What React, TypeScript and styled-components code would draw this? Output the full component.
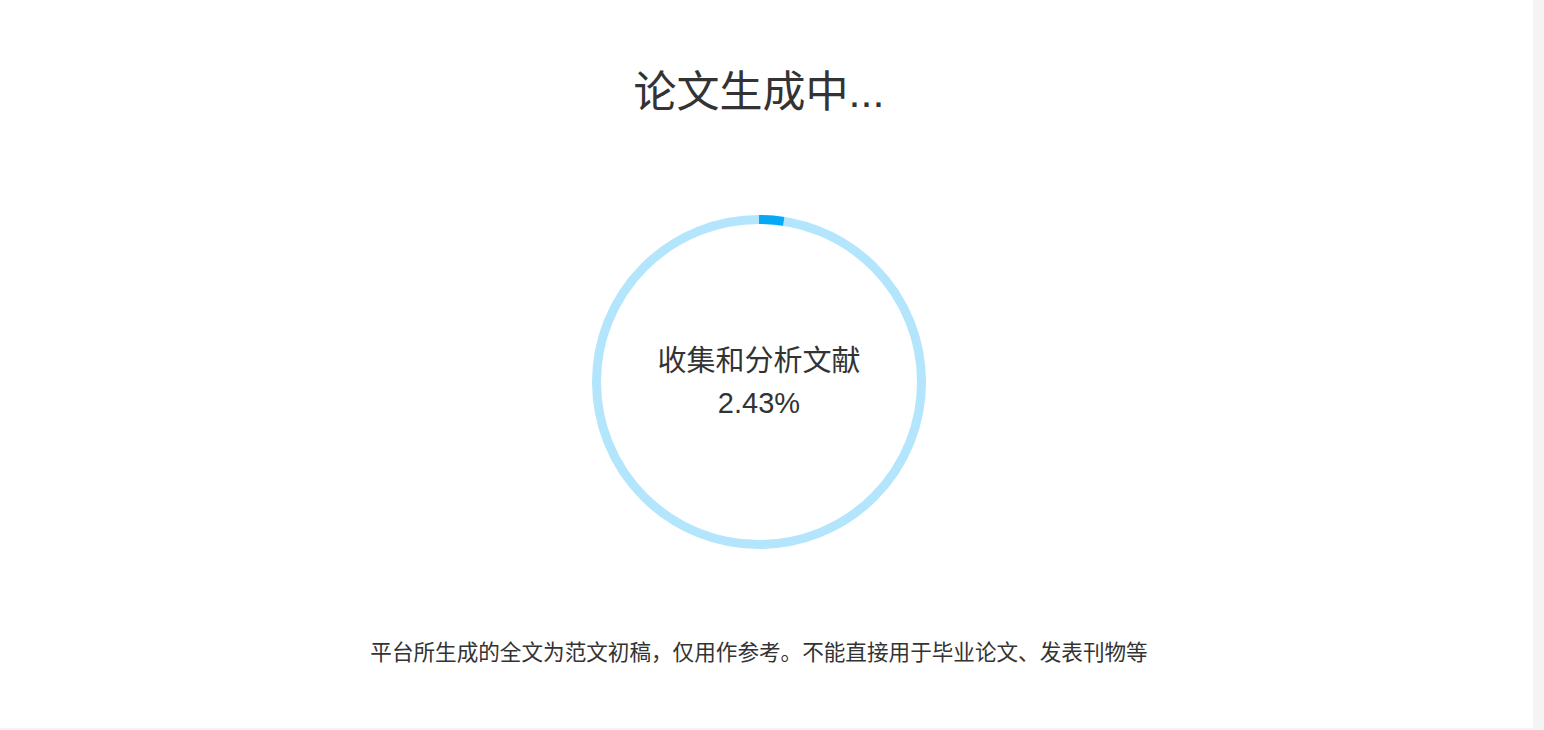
import React from "react";
import styled, { createGlobalStyle } from "styled-components";

const GlobalStyle = createGlobalStyle`
  html, body {
    margin: 0;
    padding: 0;
    background: #f4f4f4;
    overflow: hidden;
  }
  * { box-sizing: border-box; }
`;

const Page = styled.div`
  display: flex;
  width: 100%;
  height: 730px;
  padding-right: 11px;
  background: #f4f4f4;
  font-family: "Liberation Sans", Arial, "Noto Sans CJK SC", sans-serif;
  color: #333;
`;

const Card = styled.main`
  flex: 1;
  height: 728px;
  background: #fff;
  display: flex;
  flex-direction: column;
  align-items: center;
  padding-top: 66px;
  padding-right: 15px;
`;

const Title = styled.h1`
  margin: 0;
  font-size: 43px;
  line-height: 52px;
  font-weight: 400;
  color: #333;
`;

const Ring = styled.div`
  position: relative;
  width: 334px;
  height: 334px;
  margin-top: 97px;
  display: flex;
  align-items: center;
  justify-content: center;
`;

const RingSvg = styled.svg`
  position: absolute;
  inset: 0;
`;

const RingLabel = styled.div`
  position: relative;
  text-align: center;
  font-size: 29px;
  line-height: 42px;
  color: #333;
`;

const Notice = styled.p`
  margin: 89px 0 0;
  font-size: 21.6px;
  line-height: 30px;
  color: #333;
`;

const SIZE = 334;
const STROKE = 9;

function ProgressRing({ percent, label }: { percent: number; label: string }) {
  const r = (SIZE - STROKE) / 2;
  const c = 2 * Math.PI * r;
  const len = (percent / 100) * c;
  return (
    <Ring>
      <RingSvg width={SIZE} height={SIZE} viewBox={`0 0 ${SIZE} ${SIZE}`}>
        <circle cx={SIZE / 2} cy={SIZE / 2} r={r} fill="none" stroke="#b3e5fc" strokeWidth={STROKE} />
        <circle
          cx={SIZE / 2}
          cy={SIZE / 2}
          r={r}
          fill="none"
          stroke="#03a9f4"
          strokeWidth={STROKE}
          strokeDasharray={`${len} ${c}`}
          transform={`rotate(-90 ${SIZE / 2} ${SIZE / 2})`}
        />
      </RingSvg>
      <RingLabel>
        <div>{label}</div>
        <div>{percent.toFixed(2)}%</div>
      </RingLabel>
    </Ring>
  );
}

export default function App() {
  return (
    <>
      <GlobalStyle />
      <Page>
        <Card>
          <Title>论文生成中...</Title>
          <ProgressRing percent={2.43} label="收集和分析文献" />
          <Notice>平台所生成的全文为范文初稿，仅用作参考。不能直接用于毕业论文、发表刊物等</Notice>
        </Card>
      </Page>
    </>
  );
}
